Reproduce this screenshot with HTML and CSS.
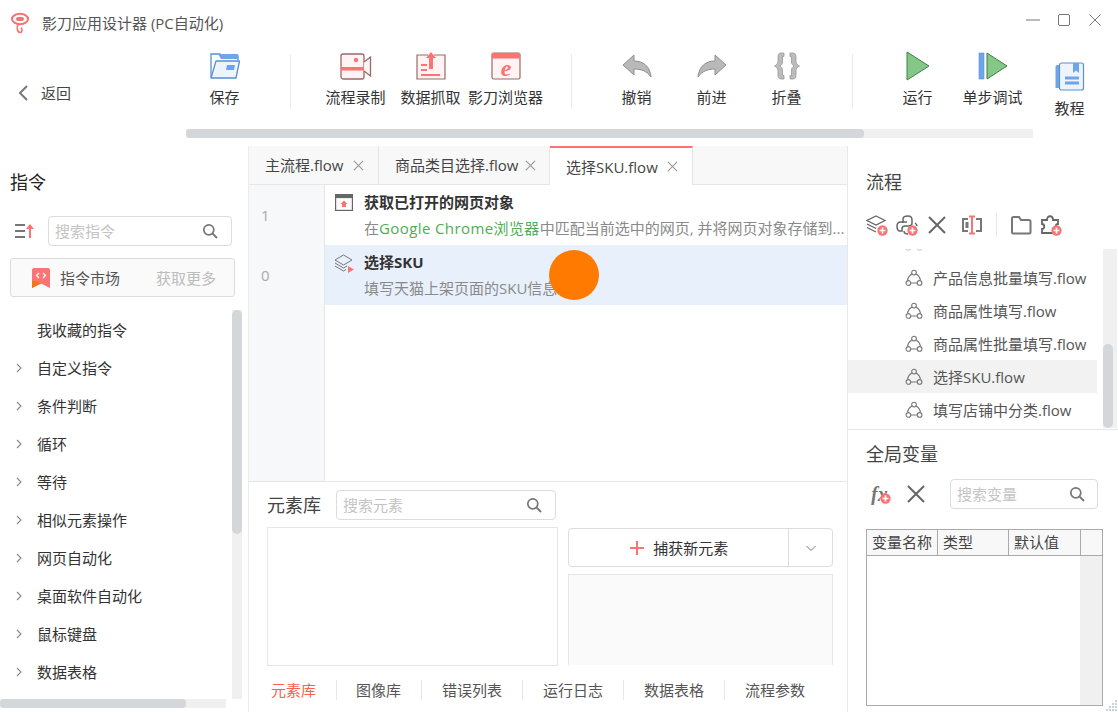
FILE: index.html
```html
<!DOCTYPE html>
<html>
  <head>
    <meta name="viewport" content="width=device-width, initial-scale=1.0">
    <title>影刀应用设计器</title>
    <link rel="stylesheet" href="styles.css">
  </head>

  <body>
    <svg class="defs" width="0" height="0">
      <symbol id="i-search" viewBox="0 0 16 16"><circle cx="6.8" cy="6.8" r="5" fill="none" stroke="#777" stroke-width="1.7"/><path d="M10.6 10.6L15 15" stroke="#777" stroke-width="2"/></symbol>
      <symbol id="i-close" viewBox="0 0 12 12"><path d="M1 1L11 11M11 1L1 11" stroke="currentColor" stroke-width="1.2" fill="none"/></symbol>
      <symbol id="i-arrow" viewBox="0 0 12 12"><path d="M4 2L8 6L4 10" stroke="#888" stroke-width="1.1" fill="none"/></symbol>
      <symbol id="i-flow" viewBox="0 0 20 20"><g fill="none" stroke="#777" stroke-width="1.2"><circle cx="10" cy="4" r="2.6"/><circle cx="3.8" cy="15.5" r="2.6"/><circle cx="16.2" cy="15.5" r="2.6"/><path d="M6.4 15.5H13.6M7.6 5.6Q3.6 8 2.8 12.4M12.4 5.6Q16.4 8 17.2 12.4"/></g></symbol>
      <symbol id="i-plus" viewBox="0 0 12 12"><circle cx="6" cy="6" r="5.6" fill="#fb7373"/><path d="M6 2.8V9.2M2.8 6H9.2" stroke="#fff" stroke-width="1.8"/></symbol>
    </svg>

    <div class="titlebar">
      <svg class="logo" width="20" height="22" viewBox="0 0 20 22"><ellipse cx="10" cy="7" rx="8" ry="5.2" fill="none" stroke="#f87171" stroke-width="2"/><rect x="6" y="5" width="8" height="4" rx="2" fill="#f87171"/><path d="M8 12.5C6.5 15 7 20 10 20.5C12.5 20.5 12.5 17 11 15.5" fill="none" stroke="#f87171" stroke-width="1.6"/></svg>
      <span class="app-title">影刀应用设计器 (PC自动化)</span>
      <div class="win-btns">
        <svg width="14" height="14" viewBox="0 0 14 14"><path d="M0 7H14" stroke="#777" stroke-width="1"/></svg>
        <svg width="14" height="14" viewBox="0 0 14 14"><rect x="1.5" y="1.5" width="11" height="11" rx="1.5" fill="none" stroke="#777" stroke-width="1"/></svg>
        <svg width="14" height="14" viewBox="0 0 14 14"><path d="M1.5 1.5L12.500 12.500M12.500 1.500L1.500 12.500" stroke="#777" stroke-width="1"/></svg>
      </div>
    </div>

    <div class="toolbar-wrap">
      <div class="back">
        <svg width="12" height="18" viewBox="0 0 12 18"><path d="M10 2L3 9L10 16" fill="none" stroke="#777" stroke-width="2"/></svg>
        <span>返回</span>
      </div>
      <div class="toolbar-rail">
        <div class="toolbar">
          <div class="tool">
            <svg width="32" height="30" viewBox="0 0 32 30"><path d="M2 26V3H11L13 5H29V9" fill="#fff" stroke="#5a8fd0" stroke-width="1.300"/><path d="M9 3H29V8H12Z" fill="#6ea5ea"/><path d="M7 10H30.500L27 27H2Z" fill="#eef4fd" stroke="#5a8fd0" stroke-width="1.300" stroke-linejoin="round"/><path d="M18 14H26L25 19H17Z" fill="#6ea5ea"/></svg>
            <span>保存</span>
          </div>
          <i class="tool-sep"></i>
          <div class="tool">
            <svg width="32" height="30" viewBox="0 0 32 30"><rect x="1" y="3" width="23" height="25" rx="2" fill="#fff3f3" stroke="#9a6a6a" stroke-width="1.300"/><path d="M24 11L30.500 6V25L24 20" fill="#fff3f3" stroke="#9a6a6a" stroke-width="1.300"/><rect x="1" y="16" width="23" height="3.500" fill="#fb7373"/><circle cx="16" cy="9" r="2.200" fill="#fb7373"/></svg>
            <span>流程录制</span>
          </div>
          <div class="tool">
            <svg width="30" height="30" viewBox="0 0 30 30"><path d="M18 4H29V28H1V4H12" fill="#fff3f3" stroke="#9a6a6a" stroke-width="1.200"/><path d="M15 1L20 7H17V18H13V7H10Z" fill="#fb7373"/><path d="M5 14H11M5 19H11M5 24H24" stroke="#fb7373" stroke-width="2"/></svg>
            <span>数据抓取</span>
          </div>
          <div class="tool">
            <svg width="30" height="28" viewBox="0 0 30 28"><rect x="1" y="1" width="28" height="26" rx="1.500" fill="#fff3f3" stroke="#9a6a6a" stroke-width="1.200"/><rect x="1" y="1" width="28" height="5.500" fill="#fb7373"/><text x="15" y="24" text-anchor="middle" class="ie-letter">e</text></svg>
            <span>影刀浏览器</span>
          </div>
          <i class="tool-sep"></i>
          <div class="tool">
            <svg width="30" height="24" viewBox="0 0 30 24"><path d="M1 11L12 1V7C21 7 28 12 29 23C25 17 19 15 12 15V21Z" fill="#b9b9b9" stroke="#8f8f8f" stroke-width="1"/></svg>
            <span>撤销</span>
          </div>
          <div class="tool">
            <svg width="30" height="24" viewBox="0 0 30 24"><path d="M29 11L18 1V7C9 7 2 12 1 23C5 17 11 15 18 15V21Z" fill="#b9b9b9" stroke="#8f8f8f" stroke-width="1"/></svg>
            <span>前进</span>
          </div>
          <div class="tool">
            <svg width="28" height="30" viewBox="0 0 28 30"><path d="M11 2H8C5.500 2 5 4 5 6V10C5 12 4 14 1.500 15C4 16 5 18 5 20V24C5 26 5.500 28 8 28H11V24.500H9.500V19C9.500 17 8.500 16 7 15C8.500 14 9.500 13 9.500 11V5.500H11ZM17 2H20C22.500 2 23 4 23 6V10C23 12 24 14 26.500 15C24 16 23 18 23 20V24C23 26 22.500 28 20 28H17V24.500H18.500V19C18.500 17 19.500 16 21 15C19.500 14 18.500 13 18.500 11V5.500H17Z" fill="#bcbcbc" stroke="#999" stroke-width=".8"/></svg>
            <span>折叠</span>
          </div>
          <i class="tool-sep"></i>
          <div class="tool">
            <svg width="24" height="30" viewBox="0 0 24 30"><path d="M1 1L23 15L1 29Z" fill="#85c787" stroke="#3f7f42" stroke-width="1"/></svg>
            <span>运行</span>
          </div>
          <div class="tool">
            <svg width="30" height="28" viewBox="0 0 30 28"><rect x="1" y="1" width="5" height="26" fill="#6ea5ea" stroke="#5a8fd0" stroke-width=".6"/><path d="M9 1L29 14L9 27Z" fill="#85c787" stroke="#3f7f42" stroke-width="1"/></svg>
            <span>单步调试</span>
          </div>
          <div class="tool tool-low">
            <svg width="30" height="30" viewBox="0 0 30 30"><path d="M4 3H2C1 3 .5 4 .5 5V26H4Z" fill="#6ea5ea"/><rect x="4.500" y="1" width="24" height="27" rx="2" fill="#eef4fd" stroke="#5a8fd0" stroke-width="1.200"/><path d="M18 1H24V11L21 8.500L18 11Z" fill="#6ea5ea"/><path d="M10 16H24M10 21H24" stroke="#6ea5ea" stroke-width="3"/></svg>
            <span>教程</span>
          </div>
        </div>
        <div class="hbar toolbar-scroll"><div class="hbar-thumb"></div></div>
      </div>
    </div>

    <div class="main">
      <!-- 左侧指令 -->
      <div class="left">
        <h2 class="panel-title">指令</h2>
        <div class="left-tools">
          <svg width="20" height="16" viewBox="0 0 20 16"><path d="M0 2H10M0 8H10M0 14H10" stroke="#777" stroke-width="2"/><path d="M15 15V3" stroke="#fb7373" stroke-width="2"/><path d="M11 6L15 1L19 6Z" fill="#fb7373"/></svg>
          <div class="search search-cmd"><span>搜索指令</span><svg width="16" height="16"><use href="#i-search"/></svg></div>
        </div>
        <div class="market">
          <svg width="18" height="20" viewBox="0 0 18 20"><path d="M2 0H16C17 0 18 1 18 2V20L9 15.500L0 20V2C0 1 1 0 2 0Z" fill="#fb7373"/><path d="M0 13H5L9 15.500L0 20Z" fill="#f97316"/><path d="M7 5L4.500 7.500L7 10M11 5L13.500 7.500L11 10" stroke="#fff" stroke-width="1.300" fill="none"/></svg>
          <span class="market-name">指令市场</span>
          <span class="market-more">获取更多</span>
        </div>
        <div class="cmd-area">
          <ul class="cmd-list">
            <li class="no-arrow">我收藏的指令</li>
            <li><svg width="12" height="12"><use href="#i-arrow"/></svg>自定义指令</li>
            <li><svg width="12" height="12"><use href="#i-arrow"/></svg>条件判断</li>
            <li><svg width="12" height="12"><use href="#i-arrow"/></svg>循环</li>
            <li><svg width="12" height="12"><use href="#i-arrow"/></svg>等待</li>
            <li><svg width="12" height="12"><use href="#i-arrow"/></svg>相似元素操作</li>
            <li><svg width="12" height="12"><use href="#i-arrow"/></svg>网页自动化</li>
            <li><svg width="12" height="12"><use href="#i-arrow"/></svg>桌面软件自动化</li>
            <li><svg width="12" height="12"><use href="#i-arrow"/></svg>鼠标键盘</li>
            <li><svg width="12" height="12"><use href="#i-arrow"/></svg>数据表格</li>
          </ul>
          <div class="vbar cmd-vbar"><div class="vbar-thumb"></div></div>
        </div>
        <div class="hbar left-hbar"><div class="hbar-thumb"></div></div>
      </div>

      <!-- 中间流程编辑 -->
      <div class="center">
        <div class="tabs">
          <div class="tab tab-a">主流程.flow<svg width="11" height="11"><use href="#i-close"/></svg></div>
          <div class="tab tab-b">商品类目选择.flow<svg width="11" height="11"><use href="#i-close"/></svg></div>
          <div class="tab tab-c active">选择SKU.flow<svg width="11" height="11"><use href="#i-close"/></svg></div>
        </div>
        <div class="editor">
          <div class="step">
            <div class="line-no">1</div>
            <svg class="step-icon" width="18" height="18" viewBox="0 0 18 18"><rect x=".6" y=".6" width="16.800" height="15.800" fill="#fff" stroke="#666" stroke-width="1.200"/><rect x=".6" y=".6" width="16.800" height="3.500" fill="#666"/><path d="M9 6.500L12.500 10H11V13H7V10H5.500Z" fill="#fb7373"/></svg>
            <div class="step-text">
              <div class="step-title">获取已打开的网页对象</div>
              <div class="step-desc">在<em>Google Chrome浏览器</em>中匹配当前选中的网页, 并将网页对象存储到...</div>
            </div>
          </div>
          <div class="step selected">
            <div class="line-no">0</div>
            <svg class="step-icon" width="20" height="20" viewBox="0 0 20 20"><g fill="none" stroke="#777" stroke-width="1"><path d="M9.500 1L18 6L9.500 11L1 6Z"/><path d="M1 9L9.500 14L13 12M1 12L9.500 17L12 15.500"/></g><path d="M14 12L20 15.500L14 19Z" fill="#fb7373"/></svg>
            <div class="step-text">
              <div class="step-title">选择SKU</div>
              <div class="step-desc">填写天猫上架页面的SKU信息</div>
            </div>
          </div>
          <div class="editor-rest"></div>
          <div class="click-dot"></div>
        </div>
        <div class="elements">
          <div class="el-head">
            <h2 class="panel-title">元素库</h2>
            <div class="search search-el"><span>搜索元素</span><svg width="16" height="16"><use href="#i-search"/></svg></div>
          </div>
          <div class="el-body">
            <div class="el-tree"></div>
            <div class="el-side">
              <div class="capture">
                <div class="capture-main">
                  <svg width="16" height="16" viewBox="0 0 16 16"><path d="M8 1V15M1 8H15" stroke="#fb7373" stroke-width="2"/></svg>
                  捕获新元素
                </div>
                <div class="capture-drop"><svg width="12" height="12" viewBox="0 0 12 12"><path d="M1.500 4L6 8.500L10.500 4" fill="none" stroke="#777" stroke-width="1"/></svg></div>
              </div>
              <div class="el-preview"></div>
            </div>
          </div>
          <div class="bottom-tabs">
            <span class="on">元素库</span>
            <span>图像库</span>
            <span>错误列表</span>
            <span>运行日志</span>
            <span>数据表格</span>
            <span>流程参数</span>
          </div>
        </div>
      </div>

      <!-- 右侧流程和变量 -->
      <div class="right">
        <div class="flows">
          <h2 class="panel-title">流程</h2>
          <div class="icon-row">
            <svg width="22" height="22" viewBox="0 0 22 22"><g fill="none" stroke="#666" stroke-width="1.300"><path d="M10 2L19 6.500L10 11L1 6.500Z"/><path d="M1 10L10 14.500M1 13.500L10 18"/></g><use href="#i-plus" x="11" y="11" width="11" height="11"/></svg>
            <svg width="22" height="22" viewBox="0 0 22 22"><g fill="none" stroke="#666" stroke-width="1.500"><path d="M7 9V5C7 3 9 2 12 2C15 2 16 4 16 6V9C16 11 14 12 12 12H9C7 12 6 13 6 15V17H4C2 17 1 15 1 12C1 9 3 8 5 8H11"/><path d="M19 9C20.500 10 21 11 21 12M12 20C9 20 8 19 8 17"/></g><use href="#i-plus" x="11" y="11" width="11" height="11"/></svg>
            <svg width="22" height="22" viewBox="0 0 22 22"><path d="M3 3L19 19M19 3L3 19" stroke="#666" stroke-width="2"/></svg>
            <svg class="rename" width="22" height="22" viewBox="0 0 22 22"><path d="M7 5H2V17H7M15 5H20V17H15" fill="none" stroke="#777" stroke-width="2"/><rect x="4.500" y="8" width="3" height="6" fill="#777"/><path d="M11 3V19M8 2.500H14M8 19.500H14" stroke="#fb7373" stroke-width="2"/></svg>
            <i class="icon-sep"></i>
            <svg width="22" height="22" viewBox="0 0 22 22"><path d="M2 4.500C2 3.500 2.500 3 3.500 3H9L11 6H19C20 6 20.500 6.500 20.500 7.500V18C20.500 19 20 19.500 19 19.500H3.500C2.500 19.500 2 19 2 18Z" fill="none" stroke="#777" stroke-width="2"/></svg>
            <svg width="22" height="22" viewBox="0 0 22 22"><path d="M2 6H7C7 1 13 1 13 6H18V10C15 10 15 15 18 15V19H2V15C5 15 5 10 2 10Z" fill="none" stroke="#666" stroke-width="1.800"/><use href="#i-plus" x="11" y="11" width="11" height="11"/></svg>
          </div>
          <div class="flow-wrap">
            <div class="flow-list">
              <div class="flow-row cut"><svg width="18" height="18"><use href="#i-flow"/></svg></div>
              <div class="flow-row"><svg width="18" height="18"><use href="#i-flow"/></svg>产品信息批量填写.flow</div>
              <div class="flow-row"><svg width="18" height="18"><use href="#i-flow"/></svg>商品属性填写.flow</div>
              <div class="flow-row"><svg width="18" height="18"><use href="#i-flow"/></svg>商品属性批量填写.flow</div>
              <div class="flow-row current"><svg width="18" height="18"><use href="#i-flow"/></svg>选择SKU.flow</div>
              <div class="flow-row"><svg width="18" height="18"><use href="#i-flow"/></svg>填写店铺中分类.flow</div>
            </div>
            <div class="vbar flow-vbar"><div class="vbar-thumb"></div></div>
          </div>
        </div>
        <div class="vars">
          <h2 class="panel-title">全局变量</h2>
          <div class="var-tools">
            <svg class="fx" width="22" height="22" viewBox="0 0 22 22"><text x="1" y="18" class="fx-letter">fx</text><use href="#i-plus" x="10" y="10" width="11" height="11"/></svg>
            <svg width="22" height="22" viewBox="0 0 22 22"><path d="M3 3L19 19M19 3L3 19" stroke="#666" stroke-width="2"/></svg>
            <div class="search search-var"><span>搜索变量</span><svg width="16" height="16"><use href="#i-search"/></svg></div>
          </div>
          <div class="var-table">
            <div class="var-head">
              <div class="col-name">变量名称</div>
              <div class="col-type">类型</div>
              <div class="col-def">默认值</div>
              <div class="col-pad"></div>
            </div>
            <div class="var-body"><div class="var-strip"></div></div>
          </div>
        </div>
        <svg class="grip" width="14" height="14" viewBox="0 0 14 14"><g fill="#c9d3dd"><rect x="11" y="2" width="2" height="2"/><rect x="8" y="5" width="2" height="2"/><rect x="11" y="5" width="2" height="2"/><rect x="5" y="8" width="2" height="2"/><rect x="8" y="8" width="2" height="2"/><rect x="11" y="8" width="2" height="2"/><rect x="2" y="11" width="2" height="2"/><rect x="5" y="11" width="2" height="2"/><rect x="8" y="11" width="2" height="2"/><rect x="11" y="11" width="2" height="2"/></g></svg>
      </div>
    </div>
  </body>
</html>
```

FILE: styles.css
```css
* {
  box-sizing: border-box;
}

html, body {
  margin: 0;
  height: 712px;
  overflow: hidden;
}

body {
  width: 1118px;
  background: #fff;
  color: #333;
  font-family: "Open Sans", "Noto Sans CJK SC", sans-serif;
  font-size: 15px;
  line-height: 20px;
}

.defs {
  position: absolute;
}

h2 {
  margin: 0;
  font-weight: normal;
}

/* title bar */
.titlebar {
  display: flex;
  align-items: center;
  height: 45px;
  padding-left: 10px;
}

.app-title {
  margin-left: 12px;
  color: #555;
}

.win-btns {
  display: flex;
  gap: 17px;
  margin-left: auto;
  margin-right: 16px;
  margin-top: -6px;
}

/* toolbar */
.toolbar-wrap {
  display: flex;
  height: 101px;
}

.back {
  display: flex;
  align-items: center;
  gap: 12px;
  width: 186px;
  height: 96px;
  padding-left: 17px;
  color: #444;
}

.toolbar-rail {
  width: 847px;
}

.toolbar {
  display: flex;
  height: 84px;
  padding-left: 1px;
  padding-top: 6px;
}

.tool {
  flex: none;
  display: flex;
  flex-direction: column;
  align-items: center;
  width: 75px;
  height: 78px;
  white-space: nowrap;
}

.tool svg {
  flex: none;
  height: 30px;
}

.tool span {
  margin-top: auto;
  margin-bottom: 22px;
  color: #333;
}

.tool-low {
  margin-left: 2px;
  padding-top: 11px;
}

.tool-low span {
  margin-bottom: 11px;
}

.tool-sep {
  flex: none;
  width: 1px;
  height: 55px;
  margin: 3px 27px 0 28px;
  background: #eaeaea;
}

.ie-letter {
  fill: #fb7373;
  font-family: "Liberation Serif", serif;
  font-style: italic;
  font-weight: bold;
  font-size: 24px;
}

.hbar {
  height: 9px;
  background: #f0f0f0;
}

.hbar-thumb {
  height: 100%;
  background: #d3d7da;
  border-radius: 4px;
}

.toolbar-scroll .hbar-thumb {
  width: 678px;
}

/* main area */
.main {
  display: flex;
  height: 566px;
}

.left {
  display: flex;
  flex-direction: column;
  width: 249px;
  border-right: 1px solid #ececec;
}

.panel-title {
  font-size: 18px;
  line-height: 24px;
  color: #444;
}

.left .panel-title {
  padding: 24px 0 0 10px;
  color: #222;
}

.left-tools {
  display: flex;
  align-items: center;
  gap: 13px;
  padding: 22px 0 0 15px;
}

.search {
  display: flex;
  align-items: center;
  justify-content: space-between;
  height: 30px;
  padding: 0 13px 0 6px;
  border: 1px solid #dcdcdc;
  border-radius: 4px;
  color: #c4c4c4;
  background: #fff;
}

.search-cmd {
  width: 184px;
}

.market {
  display: flex;
  align-items: center;
  width: 225px;
  height: 39px;
  margin: 12px 0 0 10px;
  padding: 0 18px 0 21px;
  border: 1px solid #dcdcdc;
  border-radius: 3px;
  background: #fafafa;
}

.market-name {
  margin-left: 10px;
  color: #555;
}

.market-more {
  margin-left: auto;
  color: #bdbdbd;
}

.cmd-area {
  display: flex;
  height: 389px;
  margin-top: 13px;
}

.cmd-list {
  flex: none;
  width: 232px;
  margin: 0;
  padding: 1px 0 0;
  list-style: none;
}

.cmd-list li {
  display: flex;
  align-items: center;
  gap: 12px;
  height: 38px;
  padding-left: 13px;
  color: #333;
}

.cmd-list li.no-arrow {
  padding-left: 37px;
}

.vbar {
  width: 10px;
  background: #f0f0f0;
}

.vbar-thumb {
  background: #d3d7da;
  border-radius: 5px;
}

.cmd-vbar .vbar-thumb {
  height: 224px;
}

.left-hbar {
  width: 226px;
}

.left-hbar .hbar-thumb {
  width: 186px;
}

/* center */
.center {
  display: flex;
  flex-direction: column;
  width: 599px;
  border-right: 1px solid #e8e8e8;
}

.tabs {
  display: flex;
  height: 39px;
  background: #f8f8f8;
  border-bottom: 1px solid #e6e6e6;
}

.tab {
  display: flex;
  align-items: center;
  justify-content: space-between;
  height: 38px;
  padding: 0 14px 0 16px;
  border-right: 1px solid #e6e6e6;
  color: #444;
  white-space: nowrap;
}

.tab svg {
  color: #999;
}

.tab-a {
  width: 130px;
}

.tab-b {
  width: 171px;
  padding-right: 13px;
}

.tab-c {
  width: 143px;
}

.tab.active {
  height: 39px;
  background: #fff;
  border-top: 2px solid #fb7373;
}

.editor {
  position: relative;
  display: flex;
  flex-direction: column;
  height: 297px;
  border-bottom: 1px solid #e6e6e6;
}

.step {
  display: flex;
  height: 60px;
}

.line-no {
  flex: none;
  width: 76px;
  padding: 20px 0 0 12px;
  background: #f7f8f9;
  border-right: 1px solid #e6e6e6;
  color: #aaa;
}

.step-icon {
  flex: none;
  margin: 9px 0 0 9px;
}

.step-text {
  margin-left: 10px;
  padding-top: 7px;
  white-space: nowrap;
}

.step:first-child .step-icon {
  margin-left: 10px;
}

.step:first-child .step-text {
  margin-left: 11px;
}

.step-title {
  font-weight: bold;
  color: #333;
}

.step-desc {
  margin-top: 6px;
  color: #8a8a8a;
}

.step-desc em {
  font-style: normal;
  letter-spacing: .4px;
  color: #4caf50;
}

.step.selected {
  background: #e8f0fb;
}

.editor-rest {
  flex: 1;
  width: 76px;
  background: #f7f8f9;
  border-right: 1px solid #e6e6e6;
}

.click-dot {
  position: absolute;
  left: 300px;
  top: 65px;
  width: 50px;
  height: 50px;
  border-radius: 50%;
  background: #ff7a00;
}

.elements {
  flex: 1;
  padding: 8px 14px 0 18px;
}

.el-head {
  display: flex;
  align-items: center;
  gap: 15px;
  height: 30px;
}

.search-el {
  width: 220px;
}

.el-body {
  display: flex;
  gap: 10px;
  margin-top: 7px;
}

.el-tree {
  width: 292px;
  height: 139px;
  border: 1px solid #e6e6e6;
}

.el-side {
  width: 265px;
  padding-top: 1px;
}

.capture {
  display: flex;
  height: 39px;
  border: 1px solid #dcdcdc;
  border-radius: 4px;
}

.capture-main {
  display: flex;
  flex: 1;
  align-items: center;
  justify-content: center;
  gap: 8px;
  color: #333;
}

.capture-drop {
  display: flex;
  align-items: center;
  justify-content: center;
  width: 44px;
  border-left: 1px solid #dcdcdc;
}

.el-preview {
  height: 91px;
  margin-top: 7px;
  border: 1px solid #e6e6e6;
  border-bottom: none;
  background: #fafafa;
}

.bottom-tabs {
  display: flex;
  align-items: center;
  height: 22px;
  margin-top: 13px;
  margin-left: 4px;
}

.bottom-tabs span {
  padding-right: 20px;
  margin-right: 20px;
  border-right: 1px solid #e6e6e6;
  color: #555;
  white-space: nowrap;
}

.bottom-tabs span.on {
  margin-right: 19px;
  color: #f9604f;
}

.bottom-tabs span:last-child {
  border-right: none;
}

/* right */
.right {
  position: relative;
  flex: 1;
  display: flex;
  flex-direction: column;
}

.flows {
  height: 284px;
  border-bottom: 1px solid #e6e6e6;
}

.flows .panel-title {
  padding: 24px 0 0 18px;
}

.icon-row {
  display: flex;
  align-items: center;
  gap: 8px;
  padding: 16px 0 0 18px;
  height: 45px;
}

.rename {
  margin-left: 5px;
}

.icon-sep {
  width: 1px;
  height: 24px;
  margin: 0 5px;
  background: #e6e6e6;
}

.flow-wrap {
  display: flex;
  height: 179px;
  margin-top: 10px;
}

.flow-list {
  flex: none;
  width: 249px;
  height: 179px;
  overflow: hidden;
}

.flow-row {
  display: flex;
  align-items: center;
  gap: 10px;
  height: 33px;
  padding-left: 57px;
  color: #555;
  white-space: nowrap;
}

.flow-row.cut {
  height: 12px;
  align-items: flex-end;
  overflow: hidden;
}

.flow-row.cut svg {
  flex: none;
  margin-bottom: 9px;
  opacity: .4;
}

.flow-row.current {
  background: #f2f2f2;
}

.flow-wrap .flow-vbar {
  margin-left: 6px;
  width: 14px;
}

.flow-vbar .vbar-thumb {
  width: 10px;
  height: 84px;
  margin-top: 95px;
}

.vars {
  flex: 1;
  padding: 12px 0 0 18px;
}

.var-tools {
  display: flex;
  align-items: center;
  gap: 13px;
  margin-top: 13px;
  padding-left: 4px;
}

.fx-letter {
  fill: #777;
  font-family: "Liberation Serif", serif;
  font-style: italic;
  font-weight: bold;
  font-size: 20px;
}

.search-var {
  width: 148px;
  margin-left: 10px;
}

.search-var svg {
  margin-right: -1px;
}

.var-table {
  width: 237px;
  height: 177px;
  margin-top: 20px;
  border: 1px solid #aaa;
}

.var-head {
  display: flex;
  height: 26px;
  background: #f8f8f8;
  border-bottom: 1px solid #aaa;
  color: #444;
}

.var-head div {
  padding-left: 5px;
  border-right: 1px solid #aaa;
  line-height: 25px;
  white-space: nowrap;
}

.var-head .col-name {
  width: 71px;
}

.var-head .col-type {
  width: 71px;
}

.var-head .col-def {
  width: 72px;
}

.var-head .col-pad {
  flex: 1;
  border-right: none;
}

.var-body {
  display: flex;
  justify-content: flex-end;
  height: 149px;
}

.var-strip {
  width: 22px;
  background: #f0f0f0;
}

.grip {
  position: absolute;
  right: 0;
  bottom: 0;
}
```
